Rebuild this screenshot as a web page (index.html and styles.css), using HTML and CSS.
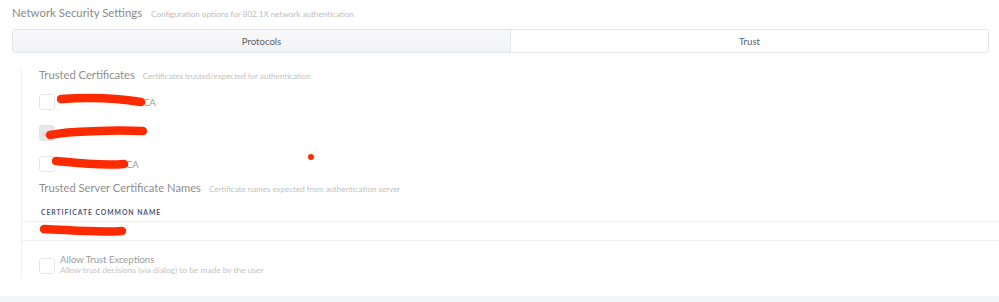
FILE: index.html
```html
<!DOCTYPE html>
<html>
<head>
<meta charset="utf-8">
<link rel="stylesheet" href="styles.css">
</head>
<body>
<div class="page-header">
  <span class="title">Network Security Settings</span>
  <span class="subtitle">Configuration options for 802.1X network authentication</span>
</div>
<div class="tabs">
  <div class="tab tab-protocols">Protocols</div>
  <div class="tab tab-trust">Trust</div>
</div>
<div class="panel">
  <div class="section-head">
    <span class="section-title">Trusted Certificates</span>
    <span class="section-sub">Certificates trusted/expected for authentication</span>
  </div>
  <div class="cert-list">
    <div class="cert-row">
      <span class="checkbox"></span>
      <span class="cert-label cert-label-1">CA</span>
      <svg class="redact redact-1" width="90" height="16" viewBox="0 0 90 16"><path d="M4 6 C30 4 60 5 84 9" /></svg>
    </div>
    <div class="cert-row">
      <span class="checkbox checked"><svg width="16" height="16" viewBox="0 0 16 16"><path d="M4 8.5 L6.5 11 L12 5" /></svg></span>
      <span class="cert-label"></span>
      <svg class="redact redact-2" width="104" height="18" viewBox="0 0 104 18"><path d="M5 12 C14 11 20 9 30 9 C60 7 80 7 98 8" /></svg>
    </div>
    <div class="cert-row">
      <span class="checkbox"></span>
      <span class="cert-label cert-label-3">CA</span>
      <svg class="redact redact-3" width="80" height="16" viewBox="0 0 80 16"><path d="M5 5 C25 7 50 10 73 8" /></svg>
    </div>
    <span class="marker"></span>
  </div>
  <div class="section-head section-head-2">
    <span class="section-title">Trusted Server Certificate Names</span>
    <span class="section-sub">Certificate names expected from authentication server</span>
  </div>
  <div class="names-table">
    <div class="names-head">CERTIFICATE COMMON NAME</div>
    <div class="names-row">
      <svg class="redact redact-4" width="90" height="16" viewBox="0 0 90 16"><path d="M5 6 C30 7 60 10 83 8" /></svg>
    </div>
  </div>
  <div class="exception">
    <span class="checkbox"></span>
    <div class="exception-text">
      <div class="exception-title">Allow Trust Exceptions</div>
      <div class="exception-sub">Allow trust decisions (via dialog) to be made by the user</div>
    </div>
  </div>
</div>
<div class="footer-bar"></div>
</body>
</html>
```
FILE: styles.css
```css
html, body {
  margin: 0;
  padding: 0;
  background: #ffffff;
}
body {
  width: 999px;
  height: 302px;
  overflow: hidden;
  font-family: "Lato", "Open Sans", sans-serif;
  color: #8a8a8a;
}
.page-header {
  display: flex;
  align-items: baseline;
  gap: 9px;
  padding: 6px 0 0 12px;
  height: 23px;
  box-sizing: content-box;
}
.title {
  font-size: 11.4px;
  color: #8a8a8a;
}
.subtitle {
  font-size: 8.1px;
  color: #bdbdbd;
}
.tabs {
  display: grid;
  grid-template-columns: 498px 1fr;
  margin-left: 12px;
  width: 977px;
  height: 24px;
  box-sizing: border-box;
  border: 1px solid #e4e5e9;
  border-radius: 3px;
  overflow: hidden;
}
.tab {
  display: flex;
  align-items: center;
  justify-content: center;
  font-size: 9.6px;
  color: #5b5f66;
}
.tab-protocols {
  background: linear-gradient(#f9f9fb, #f1f2f5);
  border-right: 1px solid #e4e5e9;
}
.tab-trust {
  background: #ffffff;
}
.panel {
  margin: 15px 0 0 21px;
  border-left: 1px solid #eef0f4;
  padding: 0 0 2px 17px;
}
.section-head {
  display: flex;
  align-items: baseline;
  gap: 8px;
  height: 14px;
  line-height: 14px;
}
.section-title {
  font-size: 11.2px;
  color: #8e8e8e;
}
.section-sub {
  font-size: 8px;
  color: #c2c2c2;
}
.cert-list {
  position: relative;
  display: flex;
  flex-direction: column;
  gap: 15px;
  margin-top: 12px;
}
.cert-row {
  position: relative;
  display: flex;
  align-items: center;
  gap: 7px;
  height: 16px;
}
.checkbox {
  display: block;
  flex: none;
  width: 16px;
  height: 16px;
  box-sizing: border-box;
  border: 1px solid #e6e6e8;
  border-radius: 3px;
  background: #ffffff;
}
.checkbox.checked {
  background: #e7e7e9;
  border-color: #e2e2e4;
}
.checkbox svg {
  display: block;
  margin: -1px;
}
.checkbox svg path {
  fill: none;
  stroke: #cfcfd2;
  stroke-width: 1.4;
}
.cert-label {
  font-size: 9.5px;
  color: #9a9a9a;
  white-space: nowrap;
}
.cert-label-1 {
  padding-left: 81px;
}
.cert-label-3 {
  padding-left: 64px;
}
.redact {
  position: absolute;
}
.redact path {
  fill: none;
  stroke: #ff2a00;
  stroke-width: 8.5;
  stroke-linecap: round;
}
.redact-1 { left: 18px; top: -1px; }
.redact-2 { left: 6px; top: -2px; }
.redact-3 { left: 12px; top: 0; }
.redact-4 { left: 17px; top: 1px; }
.marker {
  position: absolute;
  left: 269px;
  top: 60px;
  width: 6px;
  height: 6px;
  border-radius: 50%;
  background: #ff2a00;
}
.section-head-2 {
  margin-top: 9px;
}
.names-table {
  margin: 8px 0 0 -17px;
}
.names-head {
  height: 18px;
  line-height: 18px;
  padding-left: 19px;
  font-size: 6.8px;
  font-weight: 700;
  letter-spacing: 0.95px;
  color: #4e5775;
  border-bottom: 1px solid #eef0f4;
}
.names-row {
  position: relative;
  height: 18px;
  border-bottom: 1px solid #eef0f4;
}
.exception {
  display: flex;
  gap: 5px;
  margin-top: 14px;
  align-items: flex-start;
}
.exception .checkbox {
  margin-top: 3px;
}
.exception-text {
  line-height: 10px;
}
.exception-title {
  font-size: 9.5px;
  color: #9a9a9a;
}
.exception-sub {
  font-size: 8.4px;
  color: #c4c4c4;
}
.footer-bar {
  margin-top: 19px;
  height: 10px;
  background: #f4f5f9;
}
```
